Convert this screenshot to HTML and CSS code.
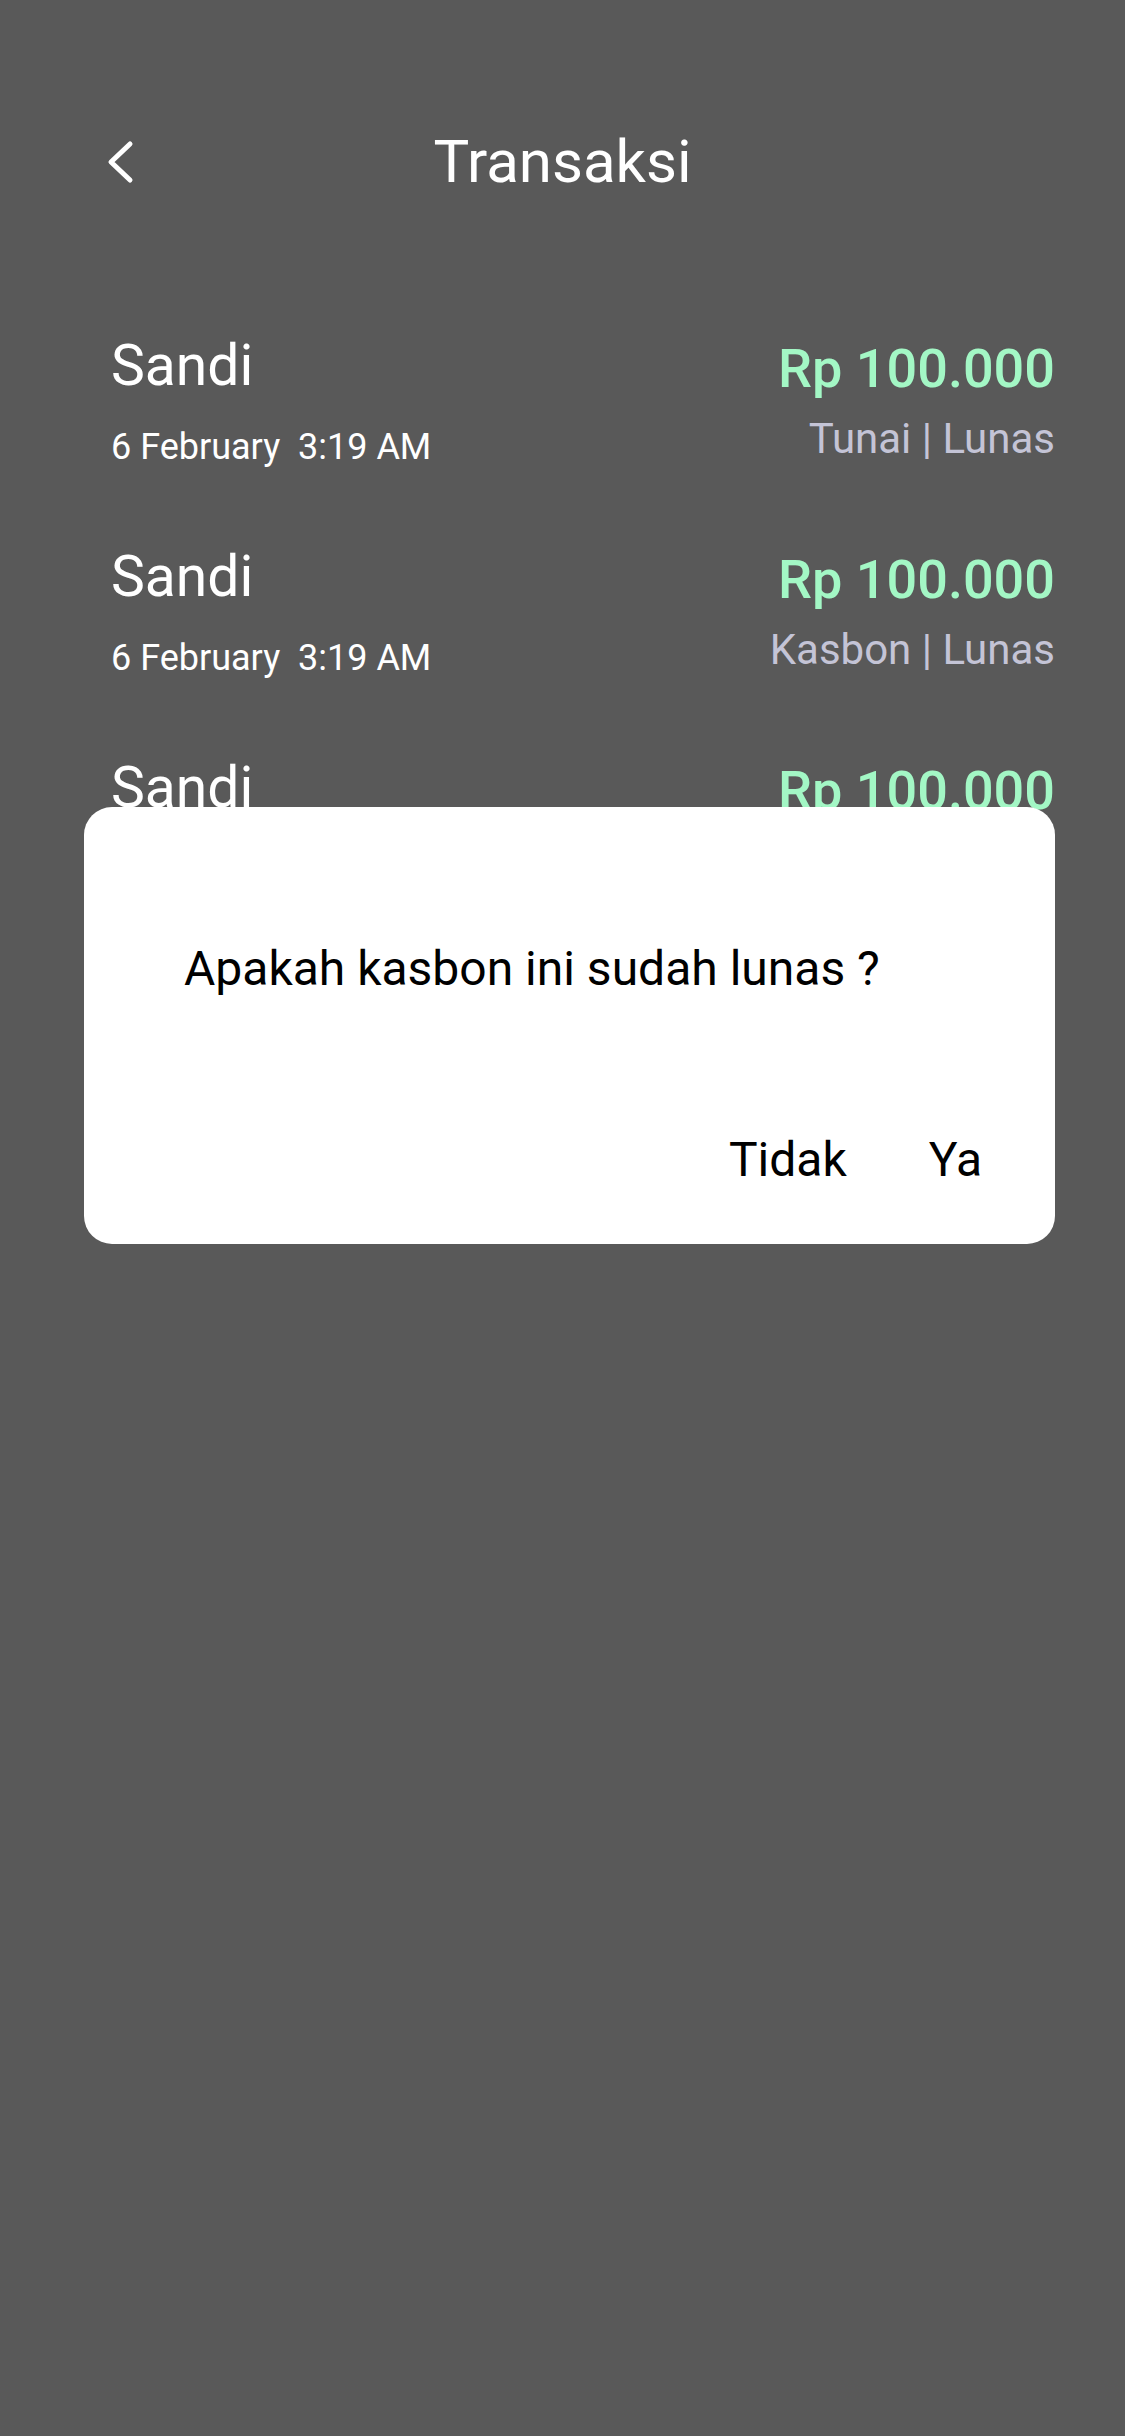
FILE: index.html
```html
<!DOCTYPE html>
<html lang="id">
<head>
<meta charset="utf-8">
<title>Transaksi</title>
<link rel="stylesheet" href="styles.css">
</head>
<body>
<div class="screen">
  <header class="header">
    <div class="back">
      <svg width="30" height="46" viewBox="0 0 30 46" aria-hidden="true">
        <path d="M24 5 L5 23 L24 41" fill="none" stroke="#ffffff" stroke-width="5" stroke-linecap="round" stroke-linejoin="round"/>
      </svg>
    </div>
    <h1 class="title">Transaksi</h1>
    <div></div>
  </header>

  <ul class="list">
    <li class="row">
      <div class="left">
        <div class="name">Sandi</div>
        <div class="date">6 February&nbsp; 3:19 AM</div>
      </div>
      <div class="right">
        <div class="amount">Rp 100.000</div>
        <div class="status">Tunai | Lunas</div>
      </div>
    </li>
    <li class="row">
      <div class="left">
        <div class="name">Sandi</div>
        <div class="date">6 February&nbsp; 3:19 AM</div>
      </div>
      <div class="right">
        <div class="amount">Rp 100.000</div>
        <div class="status">Kasbon | Lunas</div>
      </div>
    </li>
    <li class="row">
      <div class="left">
        <div class="name">Sandi</div>
        <div class="date">6 February&nbsp; 3:19 AM</div>
      </div>
      <div class="right">
        <div class="amount">Rp 100.000</div>
        <div class="status">Kasbon | Belum Lunas</div>
      </div>
    </li>
  </ul>

  <div class="dialog">
    <p class="message">Apakah kasbon ini sudah lunas ?</p>
    <div class="actions">
      <span class="btn">Tidak</span>
      <span class="btn">Ya</span>
    </div>
  </div>
</div>
</body>
</html>
```

FILE: styles.css
```css
* { box-sizing: border-box; }

html, body {
  margin: 0;
  padding: 0;
}

body {
  background: #595959;
  font-family: Roboto, "Noto Sans", Arial, sans-serif;
  color: #ffffff;
}

.screen {
  position: relative;
  width: 1125px;
  height: 2436px;
  overflow: hidden;
  background: #595959;
}

.header {
  display: grid;
  grid-template-columns: 1fr auto 1fr;
  align-items: center;
  padding-top: 122px;
  height: 202px;
}

.back {
  padding-left: 106px;
  display: flex;
  align-items: center;
  height: 80px;
}

.back svg { display: block; }

.title {
  margin: 0;
  font-size: 60px;
  font-weight: 400;
  line-height: 80px;
  text-align: center;
}

.list {
  list-style: none;
  margin: 0;
  padding: 129px 70px 0 111px;
}

.row {
  display: flex;
  justify-content: space-between;
  align-items: flex-start;
  height: 211px;
}

.left, .right {
  display: flex;
  flex-direction: column;
}

.right { align-items: flex-end; }

.name {
  font-size: 57px;
  line-height: 70px;
}

.date {
  font-size: 36px;
  line-height: 40px;
  margin-top: 26px;
}

.amount {
  font-size: 54px;
  font-weight: 500;
  line-height: 76px;
  color: #a3f7c5;
}

.status {
  font-size: 42px;
  line-height: 48px;
  margin-top: 8px;
  color: #c4c4d6;
}

.dialog {
  position: absolute;
  left: 84px;
  top: 807px;
  width: 971px;
  height: 437px;
  background: #ffffff;
  border-radius: 28px;
  padding: 134px 73px 0 100px;
  color: #000000;
}

.message {
  margin: 0;
  font-size: 48px;
  line-height: 56px;
}

.actions {
  display: flex;
  justify-content: flex-end;
  gap: 82px;
  margin-top: 135px;
}

.btn {
  font-size: 48px;
  line-height: 56px;
}
```
